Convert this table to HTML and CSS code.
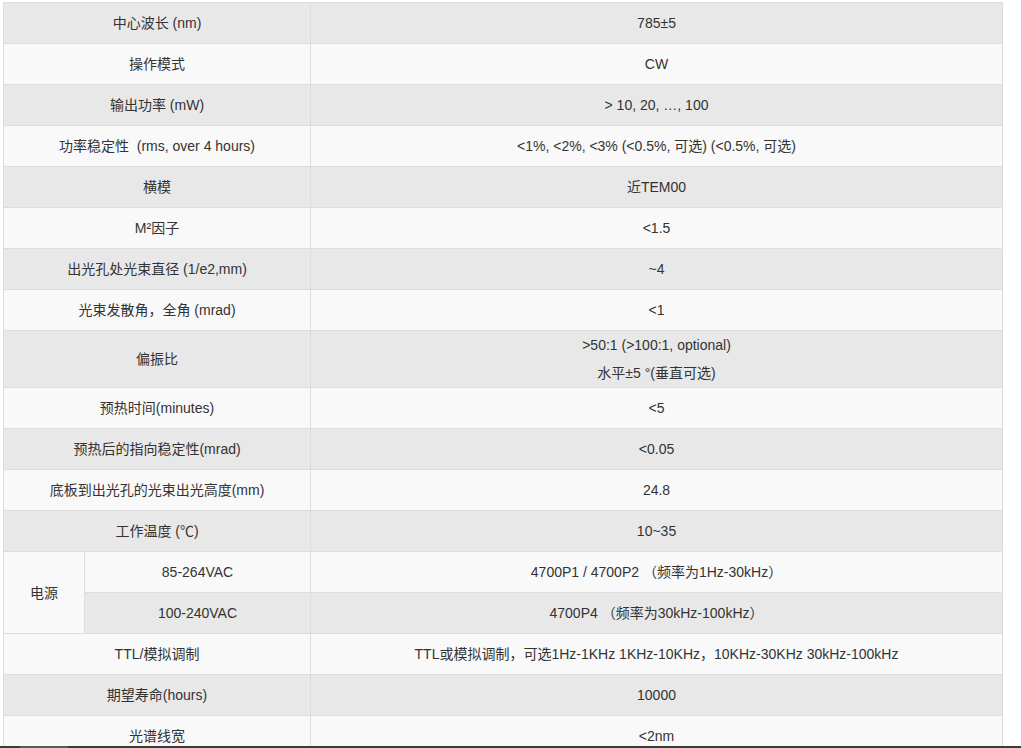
FILE: index.html
```html
<!DOCTYPE html>
<html lang="zh">
<head>
<meta charset="utf-8">
<title>参数</title>
<link rel="stylesheet" href="styles.css">
</head>
<body>
<div class="wrap">
<table class="spec">
  <colgroup><col class="c1"><col class="c2"><col class="c3"></colgroup>
  <tbody>
    <tr><td colspan="2">中心波长 (nm)</td><td>785±5</td></tr>
    <tr><td colspan="2">操作模式</td><td>CW</td></tr>
    <tr><td colspan="2">输出功率 (mW)</td><td>&gt; 10, 20, …, 100</td></tr>
    <tr><td colspan="2">功率稳定性&nbsp;&nbsp;(rms, over 4 hours)</td><td>&lt;1%, &lt;2%, &lt;3% (&lt;0.5%, 可选) (&lt;0.5%, 可选)</td></tr>
    <tr><td colspan="2">横模</td><td>近TEM00</td></tr>
    <tr><td colspan="2">M²因子</td><td>&lt;1.5</td></tr>
    <tr><td colspan="2">出光孔处光束直径 (1/e2,mm)</td><td>~4</td></tr>
    <tr><td colspan="2">光束发散角，全角 (mrad)</td><td>&lt;1</td></tr>
    <tr class="tall"><td colspan="2">偏振比</td><td class="two">&gt;50:1 (&gt;100:1, optional)<br>水平±5 °(垂直可选)</td></tr>
    <tr><td colspan="2">预热时间(minutes)</td><td>&lt;5</td></tr>
    <tr><td colspan="2">预热后的指向稳定性(mrad)</td><td>&lt;0.05</td></tr>
    <tr><td colspan="2">底板到出光孔的光束出光高度(mm)</td><td>24.8</td></tr>
    <tr><td colspan="2">工作温度 (℃)</td><td>10~35</td></tr>
    <tr><td rowspan="2" class="group">电源</td><td>85-264VAC</td><td>4700P1 / 4700P2 （频率为1Hz-30kHz）</td></tr>
    <tr><td>100-240VAC</td><td>4700P4 （频率为30kHz-100kHz）</td></tr>
    <tr><td colspan="2">TTL/模拟调制</td><td>TTL或模拟调制，可选1Hz-1KHz 1KHz-10KHz，10KHz-30KHz 30kHz-100kHz</td></tr>
    <tr><td colspan="2">期望寿命(hours)</td><td>10000</td></tr>
    <tr><td colspan="2">光谱线宽</td><td>&lt;2nm</td></tr>
  </tbody>
</table>
</div>
<div class="hbar"><span class="thumb"></span></div>
</body>
</html>
```

FILE: styles.css
```css
html, body {
  margin: 0;
  padding: 0;
  background: #ffffff;
}
body {
  font-family: "Liberation Sans", Arial, "Noto Sans CJK SC", sans-serif;
  font-size: 14px;
  color: #333333;
}
.wrap {
  padding: 2px 0 0 3px;
}
.spec {
  width: 1000px;
  border-collapse: collapse;
  table-layout: fixed;
  border: 1px solid #dddddd;
}
.c1 { width: 81px; }
.c2 { width: 226px; }
.c3 { width: auto; }
.spec td {
  border: 1px solid #dddddd;
  text-align: center;
  vertical-align: middle;
  height: 41px;
  padding: 0 8px;
  line-height: 20px;
  box-sizing: border-box;
}
.spec tr:nth-child(odd) td { background: #e8e8e8; }
.spec tr:nth-child(even) td { background: #f9f9f9; }
.spec tr.tall td { height: 57px; }
.spec td.two { line-height: 28px; padding: 0 8px; }
.hbar {
  position: fixed;
  left: 0;
  right: 0;
  bottom: 0;
  height: 2px;
  background: #3a3a3a;
}
.thumb {
  position: absolute;
  left: 20px;
  top: 0;
  width: 48px;
  height: 2px;
  background: #5a5a5a;
}
```
